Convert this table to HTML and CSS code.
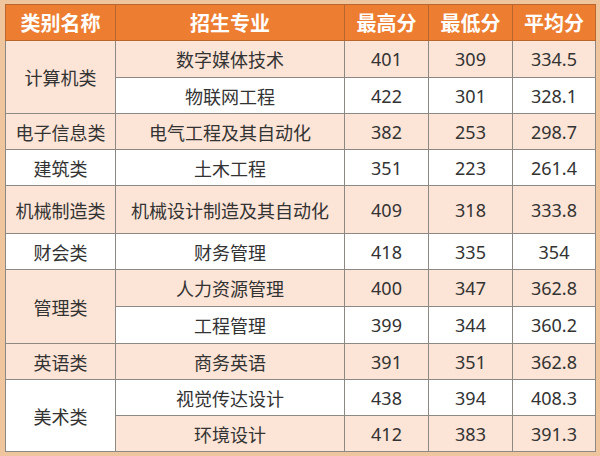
FILE: index.html
```html
<!DOCTYPE html>
<html lang="zh">
<head>
<meta charset="utf-8">
<link rel="stylesheet" href="styles.css">
</head>
<body>
<div class="frame">
<table class="scores">
  <colgroup>
    <col class="c1"><col class="c2"><col class="c3"><col class="c4"><col class="c5">
  </colgroup>
  <thead>
    <tr><th>类别名称</th><th>招生专业</th><th>最高分</th><th>最低分</th><th>平均分</th></tr>
  </thead>
  <tbody>
    <tr class="pink r37"><td rowspan="2" class="pink">计算机类</td><td>数字媒体技术</td><td class="n">401</td><td class="n">309</td><td class="n">334.5</td></tr>
    <tr class="white"><td>物联网工程</td><td class="n">422</td><td class="n">301</td><td class="n">328.1</td></tr>
    <tr class="pink"><td>电子信息类</td><td>电气工程及其自动化</td><td class="n">382</td><td class="n">253</td><td class="n">298.7</td></tr>
    <tr class="white"><td>建筑类</td><td>土木工程</td><td class="n">351</td><td class="n">223</td><td class="n">261.4</td></tr>
    <tr class="pink tall"><td>机械制造类</td><td>机械设计制造及其自动化</td><td class="n">409</td><td class="n">318</td><td class="n">333.8</td></tr>
    <tr class="white"><td>财会类</td><td>财务管理</td><td class="n">418</td><td class="n">335</td><td class="n">354</td></tr>
    <tr class="pink r37"><td rowspan="2" class="pink">管理类</td><td>人力资源管理</td><td class="n">400</td><td class="n">347</td><td class="n">362.8</td></tr>
    <tr class="white r37"><td>工程管理</td><td class="n">399</td><td class="n">344</td><td class="n">360.2</td></tr>
    <tr class="pink"><td>英语类</td><td>商务英语</td><td class="n">391</td><td class="n">351</td><td class="n">362.8</td></tr>
    <tr class="white"><td rowspan="2" class="white">美术类</td><td>视觉传达设计</td><td class="n">438</td><td class="n">394</td><td class="n">408.3</td></tr>
    <tr class="pink"><td>环境设计</td><td class="n">412</td><td class="n">383</td><td class="n">391.3</td></tr>
  </tbody>
</table>
</div>
</body>
</html>
```
FILE: styles.css
```css
html, body {
  margin: 0;
  padding: 0;
  background: #eec59c;
}
.frame {
  width: 600px;
  height: 456px;
  padding: 4px 5px 4px 5px;
  box-sizing: border-box;
  overflow: hidden;
}
.scores {
  border-collapse: collapse;
  width: 590px;
  table-layout: fixed;
  font-family: "Noto Sans CJK SC", "Noto Sans", sans-serif;
  color: #333;
}
.c1 { width: 110px; }
.c2 { width: 229px; }
.c3 { width: 84px; }
.c4 { width: 84px; }
.c5 { width: 83px; }
.scores th {
  background: #ed7d31;
  color: #fff;
  font-size: 20px;
  font-weight: bold;
  height: 35px;
  padding: 0;
  line-height: 24px;
  border: 1px solid #b8652e;
  text-align: center;
}
.scores td {
  font-size: 18px;
  height: 35px;
  padding: 0;
  border: 1px solid #8c8884;
  text-align: center;
  line-height: 20px;
}
.scores td.n {
  font-family: "Noto Sans", "Noto Sans CJK SC", sans-serif;
  font-size: 18px;
}
.scores tr.r37 td { height: 36px; }
.scores tr.tall td { height: 47px; }
.scores tr.pink td { background: #fce4d6; }
.scores tr.white td { background: #ffffff; }
.scores td.pink { background: #fce4d6 !important; }
.scores td.white { background: #ffffff !important; }
```
